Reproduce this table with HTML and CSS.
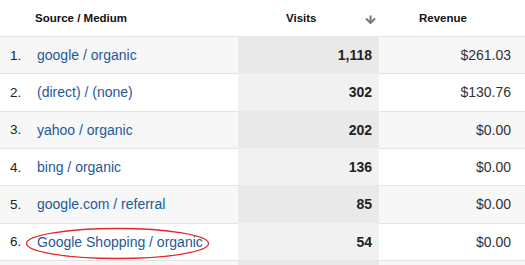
FILE: index.html
```html
<!DOCTYPE html>
<html>
<head>
<meta charset="utf-8">
<link rel="stylesheet" href="styles.css">
</head>
<body>
<div class="report">
  <div class="head">
    <div class="h-source">Source / Medium</div>
    <div class="h-visits"><span>Visits</span><svg class="arrow" width="11" height="9" viewBox="0 0 11 9"><path d="M5.5 0.5V7.5M1 3.5L5.5 8L10 3.5" fill="none" stroke="#7a7a7a" stroke-width="2"/></svg></div>
    <div class="h-revenue">Revenue</div>
  </div>
  <div class="row odd"><div class="c-source"><span class="num">1.</span><a class="link">google / organic</a></div><div class="c-visits">1,118</div><div class="c-revenue">$261.03</div></div>
  <div class="row"><div class="c-source"><span class="num">2.</span><a class="link">(direct) / (none)</a></div><div class="c-visits">302</div><div class="c-revenue">$130.76</div></div>
  <div class="row odd"><div class="c-source"><span class="num">3.</span><a class="link">yahoo / organic</a></div><div class="c-visits">202</div><div class="c-revenue">$0.00</div></div>
  <div class="row"><div class="c-source"><span class="num">4.</span><a class="link">bing / organic</a></div><div class="c-visits">136</div><div class="c-revenue">$0.00</div></div>
  <div class="row odd"><div class="c-source"><span class="num">5.</span><a class="link">google.com / referral</a></div><div class="c-visits">85</div><div class="c-revenue">$0.00</div></div>
  <div class="row"><div class="c-source"><span class="num">6.</span><a class="link">Google Shopping / organic</a></div><div class="c-visits">54</div><div class="c-revenue">$0.00</div></div>
  <div class="row odd"><div class="c-source"></div><div class="c-visits"></div><div class="c-revenue"></div></div>
  <svg class="circle" width="525" height="265" viewBox="0 0 525 265"><ellipse cx="117.5" cy="243.5" rx="91" ry="15" fill="none" stroke="#e8262c" stroke-width="1.3"/></svg>
</div>
</body>
</html>
```
FILE: styles.css
```css
html, body {
  margin: 0;
  padding: 0;
  background: #fff;
  overflow: hidden;
}
body {
  font-family: "Liberation Sans", Arial, sans-serif;
  color: #222;
}
.report {
  position: relative;
  width: 525px;
}
.head {
  display: grid;
  grid-template-columns: 238px 141px 146px;
  height: 36px;
  border-bottom: 1px solid #e3e3e3;
  align-items: center;
  font-weight: bold;
  font-size: 11.5px;
  color: #111;
}
.h-source {
  padding-left: 35px;
}
.h-visits {
  display: flex;
  align-items: center;
  justify-content: space-between;
  padding-left: 48px;
  padding-right: 3px;
}
.arrow {
  display: block;
  margin-top: 2px;
}
.h-revenue {
  padding-left: 40px;
}
.row {
  display: grid;
  grid-template-columns: 238px 141px 146px;
  height: 36.333px;
  border-bottom: 1px solid #e3e3e3;
  font-size: 14px;
  align-items: stretch;
  background: #fff;
}
.row.odd {
  background: #f7f7f7;
}
.row > div {
  display: flex;
  align-items: center;
}
.c-source {
  padding-left: 10px;
}
.num {
  width: 27px;
  color: #222;
  font-size: 13.5px;
}
.link {
  color: #1d5a98;
  text-decoration: none;
}
.c-visits {
  justify-content: flex-end;
  padding-right: 7px;
  font-weight: bold;
  background: #f1f1f1;
  margin-top: -1px;
  margin-bottom: -1px;
  color: #222;
}
.row.odd .c-visits {
  background: #e9e9e9;
}
.c-revenue {
  justify-content: flex-end;
  padding-right: 14px;
  color: #333;
}
.circle {
  position: absolute;
  left: 0;
  top: 0;
  pointer-events: none;
}
```
